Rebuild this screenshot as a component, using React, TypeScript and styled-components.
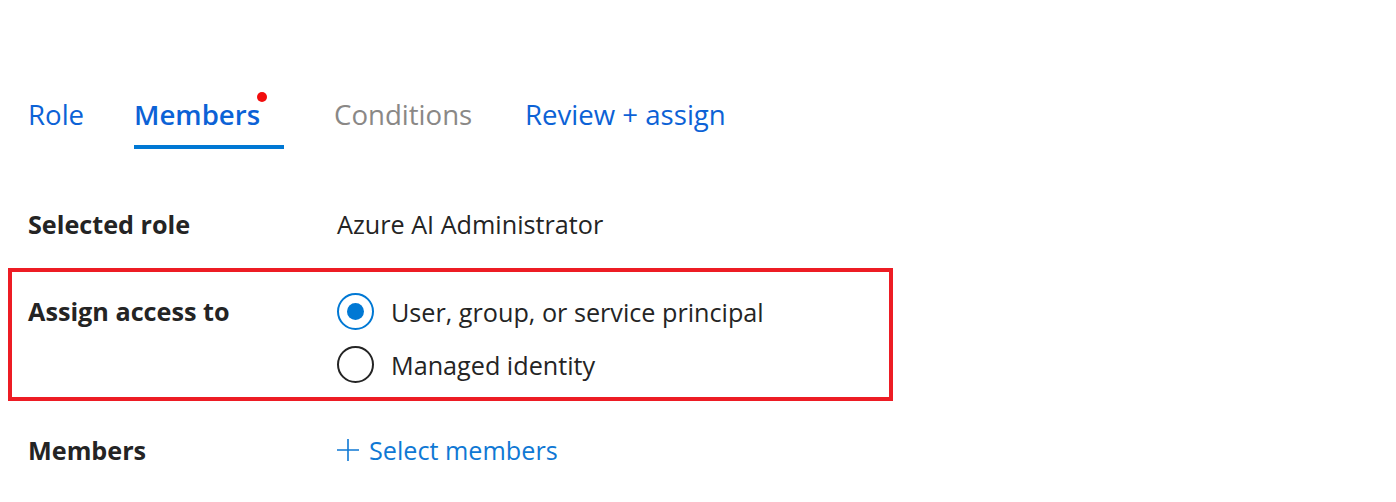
import styled, { createGlobalStyle } from 'styled-components'

const GlobalStyle = createGlobalStyle`
  body {
    margin: 0;
    background: #ffffff;
    font-family: 'Open Sans', 'Noto Sans', sans-serif;
    color: #242424;
  }
`

const Page = styled.div`
  padding: 92px 0 0 8px;
  width: 1388px;
  height: 410px;
`

const TabBar = styled.div`
  display: flex;
  padding-left: 20px;
`

const Tab = styled.div<{ $width: number; $active?: boolean; $disabled?: boolean }>`
  position: relative;
  width: ${p => p.$width}px;
  font-size: 27.6px;
  line-height: 36px;
  padding: 4px 0 13px;
  font-weight: ${p => (p.$active ? 600 : 400)};
  color: ${p => (p.$disabled ? '#8a8886' : '#0c62d6')};
  white-space: nowrap;
`

const TabLabel = styled.span<{ $active?: boolean }>`
  display: inline-block;
  border-bottom: 4px solid ${p => (p.$active ? '#0078d4' : 'transparent')};
  padding-bottom: 13px;
  margin-bottom: -17px;
  padding-right: ${p => (p.$active ? '24px' : '0')};
`

const Dot = styled.span`
  position: absolute;
  left: 123px;
  top: 0;
  width: 10px;
  height: 10px;
  border-radius: 50%;
  background: #f20d0d;
`

const Row = styled.div<{ $top: number }>`
  display: grid;
  grid-template-columns: 309px 1fr;
  align-items: center;
  padding-left: 20px;
  margin-top: ${p => p.$top}px;
  font-size: 25.2px;
  line-height: 36px;
`

const Label = styled.div`
  font-weight: 700;
`

const Value = styled.div`
  color: #242424;
`

const HighlightBox = styled.div`
  width: 861px;
  margin-top: 26px;
  border: 4px solid #ed1c24;
  padding: 13px 0 6px 16px;
  display: grid;
  grid-template-columns: 309px 1fr;
  font-size: 25.2px;
`

const BoxLabel = styled.div`
  font-weight: 700;
  line-height: 53px;
`

const RadioGroup = styled.div`
  display: flex;
  flex-direction: column;
`

const RadioRow = styled.label`
  display: flex;
  align-items: center;
  height: 53px;
  gap: 17px;
`

const RadioCircle = styled.span<{ $checked?: boolean }>`
  box-sizing: border-box;
  width: 37px;
  height: 37px;
  border-radius: 50%;
  border: 2px solid ${p => (p.$checked ? '#0078d4' : '#242424')};
  display: flex;
  align-items: center;
  justify-content: center;
  &::after {
    content: '';
    display: ${p => (p.$checked ? 'block' : 'none')};
    width: 17px;
    height: 17px;
    border-radius: 50%;
    background: #0078d4;
  }
`

const AddLink = styled.a`
  display: inline-flex;
  align-items: center;
  gap: 10px;
  color: #0f78d4;
  text-decoration: none;
`

const PlusIcon = () => (
  <svg width="22" height="22" viewBox="0 0 22 22">
    <path d="M11 0V22M0 11H22" stroke="#0f78d4" strokeWidth="1.6" fill="none" />
  </svg>
)

export default function App() {
  return (
    <Page>
      <GlobalStyle />
      <TabBar>
        <Tab $width={106}>Role</Tab>
        <Tab $width={200} $active>
          <TabLabel $active>Members</TabLabel>
          <Dot />
        </Tab>
        <Tab $width={191} $disabled>Conditions</Tab>
        <Tab $width={220}>Review + assign</Tab>
      </TabBar>

      <Row $top={61}>
        <Label>Selected role</Label>
        <Value>Azure AI Administrator</Value>
      </Row>

      <HighlightBox>
        <BoxLabel>Assign access to</BoxLabel>
        <RadioGroup>
          <RadioRow>
            <RadioCircle $checked />
            User, group, or service principal
          </RadioRow>
          <RadioRow>
            <RadioCircle />
            Managed identity
          </RadioRow>
        </RadioGroup>
      </HighlightBox>

      <Row $top={31}>
        <Label>Members</Label>
        <AddLink href="#">
          <PlusIcon />
          Select members
        </AddLink>
      </Row>
    </Page>
  )
}
